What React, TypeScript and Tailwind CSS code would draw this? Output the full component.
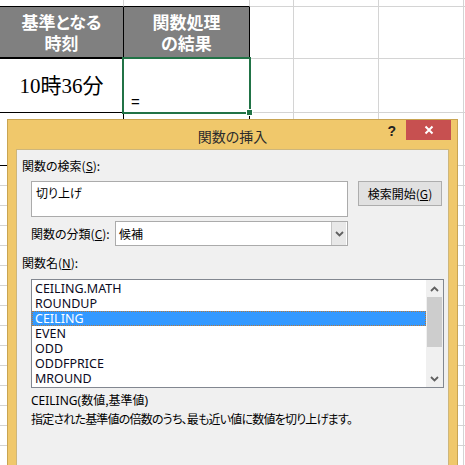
const jp = "font-['Noto_Sans_CJK_JP',sans-serif] [font-feature-settings:'palt']";
const ui = "font-['Noto_Sans','Noto_Sans_CJK_JP',sans-serif]";

function Chevron({ up = false }: { up?: boolean }) {
  return (
    <svg width="9" height="6" viewBox="0 0 9 6" className="block">
      <path
        d={up ? "M1 5 L4.5 1.5 L8 5" : "M1 1 L4.5 4.5 L8 1"}
        fill="none"
        stroke="#606060"
        strokeWidth="1.8"
      />
    </svg>
  );
}

function RightCells({ h }: { h: string }) {
  return (
    <>
      <div className={`${h} w-[44px] shrink-0 border-r border-b border-[#d4d4d4]`} />
      <div className={`${h} w-[85px] shrink-0 border-r border-b border-[#d4d4d4]`} />
      <div className={`${h} w-[85px] shrink-0 border-r border-b border-[#d4d4d4]`} />
      <div className={`${h} flex-1 border-b border-[#d4d4d4]`} />
    </>
  );
}

function Sheet() {
  return (
    <div className="flex flex-col">
      <div className="flex h-[7px]">
        <div className="w-[124px] shrink-0 border-r border-b border-r-[#d4d4d4] border-b-black" />
        <div className="w-[126px] shrink-0 border-r border-b border-r-[#d4d4d4] border-b-black" />
        <RightCells h="h-[7px]" />
      </div>
      <div className="flex h-[52px]">
        <div className={`${jp} flex w-[124px] shrink-0 flex-col items-center justify-center border-r border-b-2 border-black bg-[#808080] pb-[1px] text-[17px] font-bold text-white`}>
          <div className="h-[21px] leading-[21px]">基準となる</div>
          <div className="h-[21px] leading-[21px]">時刻</div>
        </div>
        <div className={`${jp} flex w-[126px] shrink-0 flex-col items-center justify-center border-r border-b-2 border-black bg-[#808080] pb-[1px] text-[17px] font-bold text-white`}>
          <div className="h-[21px] leading-[21px]">関数処理</div>
          <div className="h-[21px] leading-[21px]">の結果</div>
        </div>
        <RightCells h="h-[52px]" />
      </div>
      <div className="flex h-[54px]">
        <div className="flex w-[124px] shrink-0 items-center justify-center border-r border-b border-black pt-[2px] font-['Liberation_Serif','Noto_Sans_CJK_JP',serif] text-[21px] text-black">
          10時36分
        </div>
        <div className="relative flex w-[126px] shrink-0 items-end border-r border-b border-black pb-[1px] pl-[7px] font-['Liberation_Sans',sans-serif] text-[15px] leading-[18px] text-black">
          =
          <div className="absolute -left-[2px] -top-[2px] h-[57px] w-[129px] border-2 border-[#217346]" />
          <div className="absolute -right-[3px] -bottom-[3px] h-[5px] w-[5px] bg-[#217346] outline outline-1 outline-white" />
        </div>
        <RightCells h="h-[54px]" />
      </div>
      <div className="flex h-[53px]">
        <div className="w-[124px] shrink-0 border-r border-b border-black" />
        <div className="w-[126px] shrink-0 border-r border-b border-r-black border-b-[#d4d4d4]" />
        <RightCells h="h-[53px]" />
      </div>
      {Array.from({ length: 15 }, (_, i) => (
        <div className="flex h-[20px]" key={i}>
          <div className="w-[124px] shrink-0 border-r border-b border-[#d4d4d4]" />
          <div className="w-[126px] shrink-0 border-r border-b border-[#d4d4d4]" />
          <RightCells h="h-[20px]" />
        </div>
      ))}
    </div>
  );
}

const items = ["CEILING.MATH", "ROUNDUP", "CEILING", "EVEN", "ODD", "ODDFPRICE", "MROUND"];

function Dialog() {
  return (
    <div className="absolute left-[7px] top-[119px] flex h-[360px] w-[451px] flex-col border border-[#c9a552] bg-[#f0c86b]">
      <div className="grid h-[29px] grid-cols-[1fr_auto_1fr]">
        <div />
        <div className={`${jp} pt-[6px] text-[14px] leading-[20px] text-[#2b2b2b]`}>関数の挿入</div>
        <div className="flex items-start justify-end pr-[6px]">
          <span className="mr-[10px] pt-[3px] font-['Liberation_Sans',sans-serif] text-[14px] font-bold leading-[16px] text-[#222]">?</span>
          <div className="flex h-[20px] w-[45px] items-center justify-center bg-[#c75050]">
            <svg width="10" height="10" viewBox="0 0 10 10">
              <path d="M1.5 1.5 L8.5 8.5 M8.5 1.5 L1.5 8.5" stroke="#fff" strokeWidth="2" />
            </svg>
          </div>
        </div>
      </div>
      <div className={`${jp} mx-[8px] flex flex-1 flex-col border border-[#cdb67c] bg-[#f0f0f0] text-[12px] leading-[16px] text-black`}>
        <div className="pl-[5px] pt-[8px]">
          関数の検索(<span className="underline">S</span>):
        </div>
        <div className="mt-[7px] flex items-start pl-[14px]">
          <div className="h-[36px] w-[317px] border border-[#ababab] bg-white pl-[4px] pt-[3px]">切り上げ</div>
          <div className="ml-[10px] flex h-[25px] w-[84px] items-center justify-center border border-[#adadad] bg-[#e1e1e1]">
            検索開始(<span className="underline">G</span>)
          </div>
        </div>
        <div className="mt-[4px] flex items-center pl-[14px]">
          <div className="w-[84px]">
            関数の分類(<span className="underline">C</span>):
          </div>
          <div className="flex h-[25px] w-[233px] items-center border border-[#ababab] bg-white">
            <span className="flex-1 pl-[3px]">候補</span>
            <div className="mr-[1px] flex h-[23px] w-[15px] items-center justify-center border-l border-[#c5c5c5] bg-[#e8e8e8]">
              <Chevron />
            </div>
          </div>
        </div>
        <div className="mt-[9px] pl-[5px]">
          関数名(<span className="underline">N</span>):
        </div>
        <div className="ml-[14px] mt-[8px] flex h-[109px] w-[413px] border border-[#828790] bg-white">
          <div className={`${ui} flex-1 pt-[1px] text-[12.5px] leading-[15px]`}>
            {items.map((name) =>
              name === "CEILING" ? (
                <div key={name} className="h-[15px] border border-dotted border-[#b5793a] bg-[#3399ff] pl-[2px] leading-[13px] text-white">
                  {name}
                </div>
              ) : (
                <div key={name} className="h-[15px] pl-[3px] text-[#0a0a1e]">
                  {name}
                </div>
              ),
            )}
          </div>
          <div className="flex w-[17px] flex-col bg-[#f0f0f0]">
            <div className="flex h-[17px] items-center justify-center">
              <Chevron up />
            </div>
            <div className="mx-[1px] h-[50px] bg-[#cdcdcd]" />
            <div className="flex-1" />
            <div className="flex h-[17px] items-center justify-center">
              <Chevron />
            </div>
          </div>
        </div>
        <div className="mt-[4px] pl-[14px]">
          <span className={ui}>CEILING(</span>数値,基準値<span className={ui}>)</span>
        </div>
        <div className="mt-[2px] pl-[14px] tracking-[-0.8px]">指定された基準値の倍数のうち、最も近い値に数値を切り上げます。</div>
      </div>
    </div>
  );
}

export default function App() {
  return (
    <div className="relative h-[465px] w-[465px] overflow-hidden bg-white">
      <Sheet />
      <Dialog />
    </div>
  );
}
